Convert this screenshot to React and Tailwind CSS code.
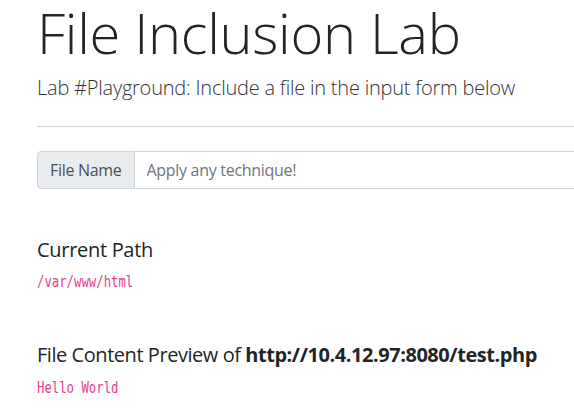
export default function App() {
  return (
    <div className="min-h-screen w-full overflow-hidden bg-white text-[#212529] [font-family:'Open_Sans',sans-serif]">
      <div className="w-[620px] pl-[37px]">
        <h1 className="text-[56px] font-light leading-[1.2] mt-[-1px] tracking-[-0.3px]">File Inclusion Lab</h1>
        <p className="mt-[7px] text-[20px] font-light tracking-[-0.22px] text-[#2f353a]">
          Lab #Playground: Include a file in the input form below
        </p>
        <hr className="mt-[23px] border-t border-[#d0d0d0]" />
        <div className="mt-[24px] flex h-[38px]">
          <span className="flex items-center rounded-l-[4px] border border-[#ced4da] bg-[#e9ecef] px-3 text-[16px] tracking-[-0.3px] text-[#495057]">
            File Name
          </span>
          <input
            className="flex-1 border border-l-0 border-[#ced4da] px-3 text-[16px] tracking-[-0.3px] text-[#495057] placeholder:text-[#6c757d] outline-none"
            placeholder="Apply any technique!"
          />
        </div>
        <h5 className="mt-[49px] text-[20px] leading-[1.2] tracking-[-0.3px]">Current Path</h5>
        <code className="mt-[11px] block w-fit origin-left scale-x-[0.82] text-[15px] leading-[18px] text-[#e83e8c] [font-family:'DejaVu_Sans_Mono',monospace]">
          /var/www/html
        </code>
        <h5 className="mt-[52px] text-[20px] leading-[1.2] tracking-[-0.45px]">
          File Content Preview of <b className="font-bold">http://10.4.12.97:8080/test.php</b>
        </h5>
        <code className="mt-[12px] block w-fit origin-left scale-x-[0.82] text-[15px] leading-[18px] text-[#e83e8c] [font-family:'DejaVu_Sans_Mono',monospace]">
          Hello World
        </code>
      </div>
    </div>
  )
}
